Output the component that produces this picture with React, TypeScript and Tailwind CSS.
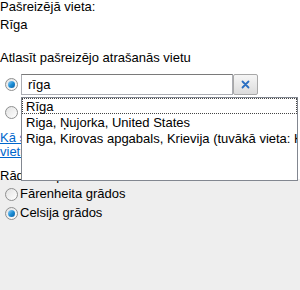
import React from "react";

function Radio({ checked }: { checked?: boolean }) {
  return (
    <span className="flex h-[13px] w-[13px] shrink-0 items-center justify-center rounded-full border border-[#8e8f8f] bg-gradient-to-br from-[#e2e2e2] to-[#ffffff]">
      {checked && (
        <span className="h-[7px] w-[7px] rounded-full bg-gradient-to-br from-[#8fd3f7] via-[#1b8fd6] to-[#0d5da3]" />
      )}
    </span>
  );
}

const results = [
  "Rīga",
  "Riga, Ņujorka, United States",
  "Riga, Kirovas apgabals, Krievija (tuvākā vieta: Kirova)",
];

export default function App() {
  return (
    <div className="relative h-[290px] w-[300px] overflow-hidden bg-[#eeeeee] font-['Liberation_Sans',Arial,sans-serif] text-[13px] text-black">
      <div className="h-[181px] bg-white">
        <div className="-mt-[2px] leading-[18px]">
          <p>Pašreizējā vieta:</p>
          <p>Rīga</p>
        </div>
        <p className="mt-[15px] leading-[18px]">Atlasīt pašreizējo atrašanās vietu</p>

        <div className="mt-[7px] flex h-[21px] items-center">
          <span className="ml-[5px]">
            <Radio checked />
          </span>
          <div className="ml-[3px] flex h-[21px]">
            <div className="flex w-[212px] items-center border border-[#abadb3] border-t-[#7a7a7a] pl-[6px]">
              rīga
            </div>
            <button className="flex w-[25px] items-center justify-center rounded-[2px] border border-[#a8a8a8] bg-gradient-to-b from-[#f6f6f6] to-[#dcdcdc]">
              <svg width="9" height="9" viewBox="0 0 9 9">
                <path d="M1.5 1.5 L7.5 7.5 M7.5 1.5 L1.5 7.5" stroke="#2a6fc2" strokeWidth="1.8" strokeLinecap="round" />
              </svg>
            </button>
          </div>
        </div>

        <div className="mt-[10px] flex h-[14px] items-center">
          <span className="ml-[5px]">
            <Radio />
          </span>
          <span className="ml-[6px]">Cita vieta</span>
        </div>

        <p className="mt-[12px] leading-[14px] text-[#0066cc] underline">
          Kā sameklēt savu atrašanās
          <br />
          vietu?
        </p>
        <p className="mt-[10px] leading-[14px]">Rādīt temperatūru:</p>
      </div>

      <div className="flex flex-col gap-[1px] pt-[6px]">
        <label className="flex h-[18px] items-center">
          <span className="ml-[5px]">
            <Radio />
          </span>
          <span className="ml-[2px]">Fārenheita grādos</span>
        </label>
        <label className="flex h-[18px] items-center">
          <span className="ml-[5px]">
            <Radio checked />
          </span>
          <span className="ml-[2px]">Celsija grādos</span>
        </label>
      </div>

      <ul className="absolute left-[21px] top-[97px] h-[84px] w-[277px] overflow-hidden border border-[#828790] bg-white">
        {results.map((r, i) => (
          <li
            key={r}
            className={
              "h-[16px] whitespace-nowrap pl-[3px] leading-[15px] " +
              (i === 0 ? "border border-dotted border-[#444]" : "border border-transparent")
            }
          >
            {r}
          </li>
        ))}
      </ul>
    </div>
  );
}
